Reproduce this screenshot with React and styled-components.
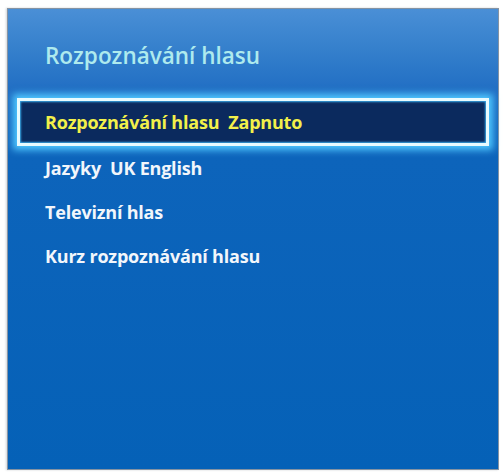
import React from "react";
import styled, { createGlobalStyle } from "styled-components";

const Global = createGlobalStyle`
  html, body { margin: 0; padding: 0; background: #ffffff; }
  body { font-family: "Open Sans", "Noto Sans", sans-serif; }
`;

const Page = styled.div`
  width: 504px;
  height: 476px;
  padding: 8px 5px 6px 7px;
  box-sizing: border-box;
  background: #ffffff;
`;

const Panel = styled.div`
  height: 100%;
  box-sizing: border-box;
  border: 1px solid #8593a3;
  box-shadow: -1px 0 2px rgba(120, 130, 140, 0.35);
  background: linear-gradient(
    to bottom,
    #4a8fd6 0px,
    #3580cc 40px,
    #226fc4 80px,
    #0d64bb 150px,
    #0561b7 100%
  );
  display: flex;
  flex-direction: column;
`;

const Title = styled.div`
  padding: 31px 0 0 37px;
  height: 57px;
  box-sizing: border-box;
  font-size: 22.5px;
  font-weight: 600;
  color: #aeeaee;
  letter-spacing: 0px;
`;

const List = styled.div`
  display: flex;
  flex-direction: column;
  padding: 32px 9px 0 9px;
`;

const Item = styled.div`
  height: ${(p) => (p.$active ? "48px" : "44px")};
  box-sizing: border-box;
  display: flex;
  align-items: center;
  padding-left: ${(p) => (p.$active ? "25px" : "28px")};
  font-size: 18px;
  font-weight: 700;
  letter-spacing: -0.2px;
  color: ${(p) => (p.$active ? "#f2f04a" : "#f2f6fb")};
  background: ${(p) => (p.$active ? "#0b2a5e" : "transparent")};
  border: ${(p) => (p.$active ? "3px solid #e8fbff" : "none")};
  box-shadow: ${(p) =>
    p.$active ? "0 0 7px 4px #4fc8ff, inset 0 0 2px 1px #3aa8e8" : "none"};
  margin-bottom: ${(p) => (p.$active ? "0" : "0")};
  white-space: pre;
`;

const items = [
  { label: "Rozpoznávání hlasu  Zapnuto", active: true },
  { label: "Jazyky  UK English" },
  { label: "Televizní hlas" },
  { label: "Kurz rozpoznávání hlasu" },
];

export default function App() {
  return (
    <>
      <Global />
      <Page>
        <Panel>
          <Title>Rozpoznávání hlasu</Title>
          <List>
            {items.map((it) => (
              <Item key={it.label} $active={it.active}>
                {it.label}
              </Item>
            ))}
          </List>
        </Panel>
      </Page>
    </>
  );
}
